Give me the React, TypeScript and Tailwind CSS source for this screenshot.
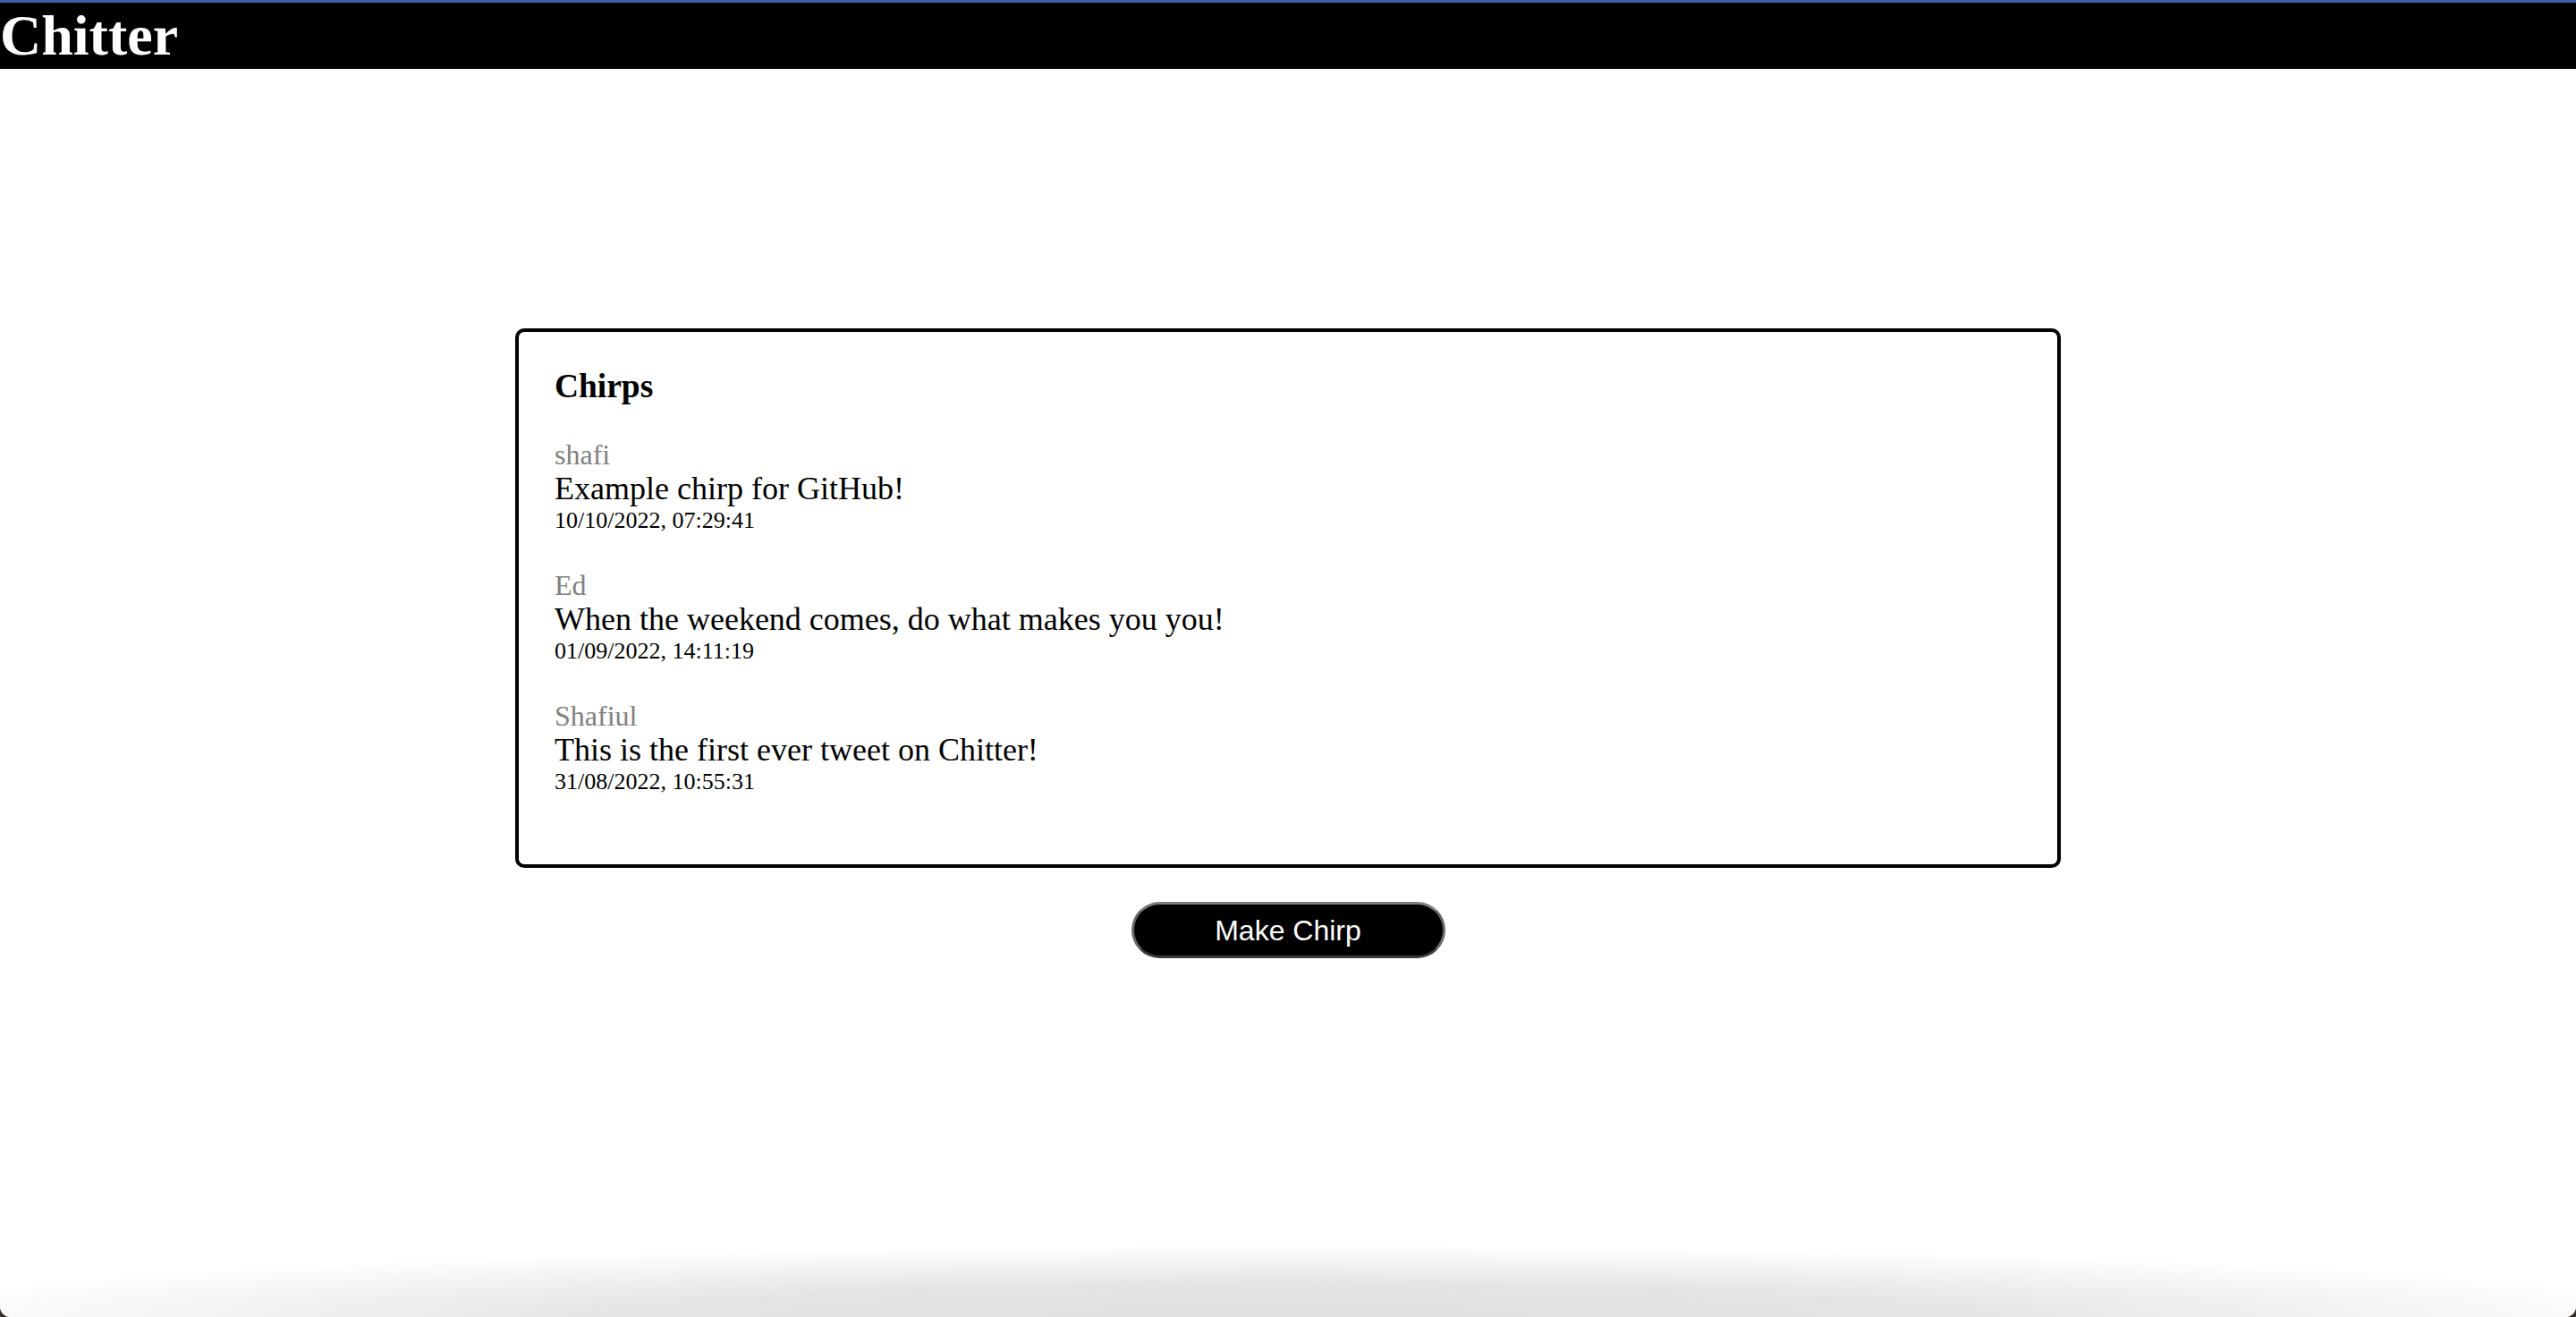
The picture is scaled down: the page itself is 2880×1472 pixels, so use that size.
const chirps = [
  { name: 'shafi', text: 'Example chirp for GitHub!', time: '10/10/2022, 07:29:41' },
  { name: 'Ed', text: 'When the weekend comes, do what makes you you!', time: '01/09/2022, 14:11:19' },
  { name: 'Shafiul', text: 'This is the first ever tweet on Chitter!', time: '31/08/2022, 10:55:31' },
];

const Chirp = ({ name, text, time }: { name: string; text: string; time: string }) => {
  return (
    <div className="flex flex-col">
      <p className="text-[32px] leading-[36px] text-[#808080]">{name}</p>
      <p className="text-[36px] leading-[41px] text-black">{text}</p>
      <p className="text-[26px] leading-[29px] text-black">{time}</p>
    </div>
  );
};

const App = () => {
  return (
    <div className="flex h-[1472px] flex-col overflow-hidden bg-[#34322a] font-['Liberation_Serif',serif]">
      <div className="flex flex-1 flex-col overflow-hidden rounded-b-[12px] bg-white">
        <div className="h-[3px] bg-[#3a62a8]" />
        <h1 className="bg-black text-[64px] font-bold leading-[74px] text-white">Chitter</h1>

        <main className="flex flex-col items-center pt-[290px]">
          <div className="flex w-[1728px] flex-col rounded-[10px] border-4 border-black px-[40px] pb-[78px] pt-[40px]">
            <h3 className="mb-[38px] text-[37.44px] font-bold leading-[41.4px]">Chirps</h3>
            <div className="flex flex-col gap-[40px]">
              {chirps.map((c) => (
                <Chirp key={c.time} {...c} />
              ))}
            </div>
          </div>

          <button className="mt-[38px] flex h-[63px] w-[351px] items-center justify-center rounded-full border-[3px] border-x-[#686868] border-b-[#3a3a3a] border-t-[#7c7c7c] bg-black font-['Liberation_Sans',Arial,sans-serif] text-[32px] text-white">
            Make Chirp
          </button>
        </main>

        <div className="flex-1" />
        <div className="h-[80px] bg-[radial-gradient(55%_100%_at_50%_100%,#e0e0e0_0%,#e4e4e4_45%,#ffffff_100%)]" />
      </div>
    </div>
  );
};

export default App;
